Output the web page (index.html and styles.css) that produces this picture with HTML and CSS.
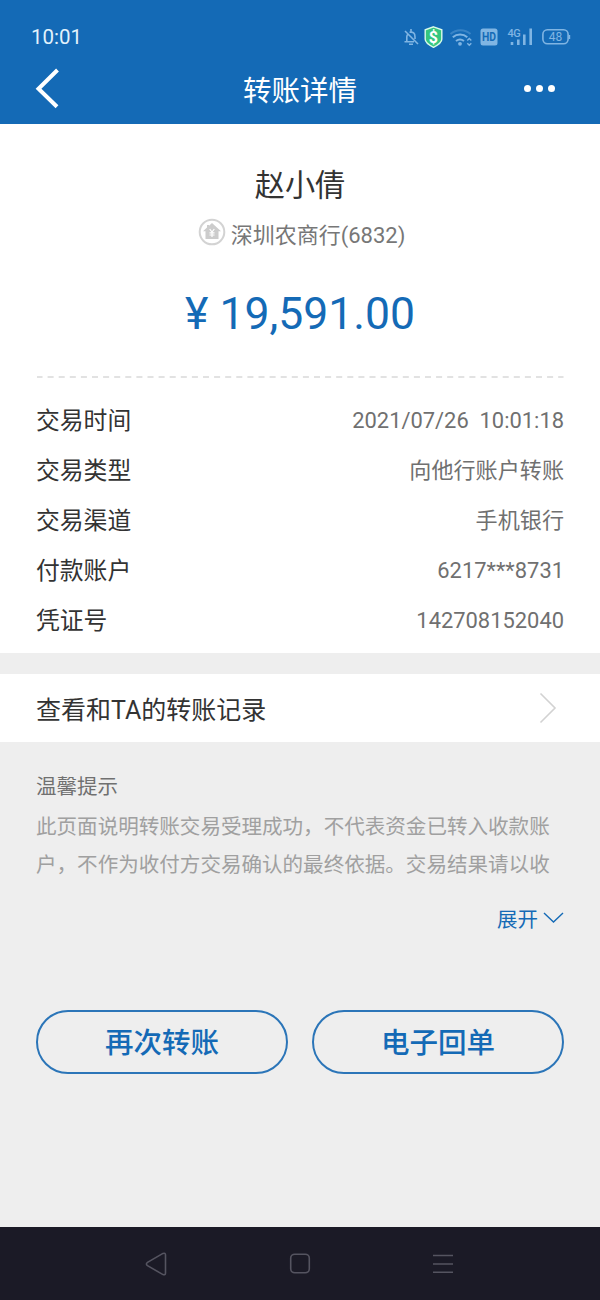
FILE: index.html
```html
<!DOCTYPE html>
<html lang="zh-CN">
<head>
<meta charset="utf-8">
<title>转账详情</title>
<link rel="stylesheet" href="styles.css">
</head>
<body>
<div class="screen">
  <header class="header">
    <div class="status">
      <span class="clock">10:01</span>
      <svg class="status-icons" width="172" height="28" viewBox="400 22 172 28">
        <g class="line">
          <path d="M404.500 41.700h9.500M406.800 41.500v-4.500q0-2 1.300-3.300M409.500 32.300q5.500-1 5.500 4.700v2M411 29v2.500M409 44.300h4M405 31l13 13"/>
        </g>
        <path class="shield-edge" d="M433.500 26.800l8.300 3v9.500c0 3.700-3.800 5.800-8.300 8-4.500-2.200-8.300-4.300-8.300-8v-9.500z"/>
        <text class="dollar" x="433.300" y="42.500">$</text>
        <path class="wifi-faint" d="M450.500 34a15 15 0 0 1 20 0"/>
        <path class="wifi" d="M452.800 37.300a11 11 0 0 1 14.500 0M456 41a6.500 6.500 0 0 1 8 0"/>
        <circle class="fill" cx="460" cy="43.800" r="1.900"/>
        <path class="tiny" d="M467.300 40.500l2-2 2 2M467.300 43.300l2 2 2-2"/>
        <rect class="fill" x="480.500" y="28.500" width="17" height="17" rx="2.500"/>
        <text class="hd" x="489" y="41.300" textLength="14" lengthAdjust="spacingAndGlyphs">HD</text>
        <text class="net" x="507.500" y="37">4G</text>
        <path class="bars" d="M512 42v3M518.300 39.500V45M524.300 34.500V45M530.700 28.500V45"/>
        <rect class="battery" x="542.900" y="29.800" width="25.200" height="14" rx="4.500"/>
        <path class="battery" d="M569.400 35v4"/>
        <text class="level" x="555.500" y="41">48</text>
      </svg>
    </div>
    <div class="nav">
      <svg class="back" width="26" height="42" viewBox="0 0 26 42"><path d="M23.500 2L4.500 20.800l18.500 18"/></svg>
      <h1 class="title">转账详情</h1>
      <div class="more"><i></i><i></i><i></i></div>
    </div>
  </header>

  <main>
    <section class="summary">
      <div class="name">赵小倩</div>
      <div class="bank">
        <svg width="28" height="28" viewBox="0 0 28 28">
          <circle class="ring" cx="14" cy="14" r="12.300"/>
          <path class="house" d="M14 5l9 8.200h-2.500V21H7.500v-7.800H5L9 9.500V7h2v.8z"/>
          <path class="yen" d="M11.700 11l2.300 3 2.300-3M14 14v5M11.500 14.800h5M11.500 17h5"/>
        </svg>
        <span>深圳农商行(6832)</span>
      </div>
      <div class="amount"><span>¥</span><span>19,591.00</span></div>
    </section>
    <svg class="divider" width="527" height="2" viewBox="0 0 527 2"><path d="M0 1h527"/></svg>
    <dl class="details">
      <div class="row"><dt>交易时间</dt><dd class="num">2021/07/26&nbsp; 10:01:18</dd></div>
      <div class="row"><dt>交易类型</dt><dd>向他行账户转账</dd></div>
      <div class="row"><dt>交易渠道</dt><dd>手机银行</dd></div>
      <div class="row"><dt>付款账户</dt><dd class="num">6217***8731</dd></div>
      <div class="row"><dt>凭证号</dt><dd class="num">142708152040</dd></div>
    </dl>
    <div class="history">
      <span>查看和TA的转账记录</span>
      <svg width="18" height="32" viewBox="0 0 18 32"><path d="M1.500 1.500L16 16 1.500 30.500"/></svg>
    </div>
    <section class="tips">
      <h2>温馨提示</h2>
      <p>此页面说明转账交易受理成功，不代表资金已转入收款账<br>户，不作为收付方交易确认的最终依据。交易结果请以收</p>
      <div class="expand"><span>展开</span><svg width="21" height="12" viewBox="0 0 21 12"><path d="M1 1l9.500 9L20 1"/></svg></div>
    </section>
    <div class="actions">
      <button>再次转账</button>
      <button>电子回单</button>
    </div>
  </main>

  <footer class="system">
    <svg width="24" height="26" viewBox="0 0 24 26"><path d="M19 2.400L3.500 11.300q-2.200 1.700 0 3.400L19 23.600q2.500.8 2.500-1.600V4q0-2.400-2.500-1.600z"/></svg>
    <svg width="24" height="26" viewBox="0 0 24 26"><rect x="2.700" y="3.200" width="18.600" height="18.600" rx="4"/></svg>
    <svg width="24" height="26" viewBox="0 0 24 26"><path d="M2 4.500h20M2 13h20M2 21.300h20"/></svg>
  </footer>
</div>
</body>
</html>
```
FILE: styles.css
```css
* { box-sizing: border-box; }
body {
  margin: 0;
  font-family: Roboto, "Noto Sans CJK SC", sans-serif;
  color: #333;
}
h1, h2, p, dl, dd { margin: 0; font-weight: 400; }
svg { display: block; fill: none; flex: none; }
.screen {
  width: 600px;
  height: 1300px;
  display: flex;
  flex-direction: column;
  background: #eee;
}
.header { height: 124px; background: #146ab6; color: #fff; }
.status {
  height: 54px;
  padding: 19px 28px 0 31px;
  display: flex;
  justify-content: space-between;
}
.clock { font-size: 20.5px; line-height: 36px; color: #e2f2fc; }
.status-icons { margin-top: 3px; }
.status-icons .line { stroke: #80b5e3; stroke-width: 1.6; }
.shield-edge { fill: #35c67f; stroke: #d9fbe9; stroke-width: 1.4; }
.dollar { font-size: 16px; font-weight: 700; fill: #fff; text-anchor: middle; }
.wifi { stroke: #80b5e3; stroke-width: 2; }
.wifi-faint { stroke: #3984c6; stroke-width: 2; }
.tiny { stroke: #80b5e3; stroke-width: 1.4; }
.fill { fill: #80b5e3; }
.hd { font-size: 12px; font-weight: 700; fill: #146ab6; text-anchor: middle; }
.net { font-size: 11px; font-weight: 500; letter-spacing: -0.6px; fill: #80b5e3; }
.bars { stroke: #80b5e3; stroke-width: 2.6; }
.battery { stroke: #80b5e3; stroke-width: 1.6; }
.level { font-size: 12px; fill: #80b5e3; text-anchor: middle; }
.nav {
  height: 70px;
  padding: 0 45px 0 34px;
  display: grid;
  grid-template-columns: 1fr auto 1fr;
  align-items: center;
}
.back { stroke: #fff; stroke-width: 4; }
.title { height: 70px; padding: 2px 0 0 11px; font-size: 28.5px; line-height: 72px; }
.more { display: flex; gap: 5px; justify-content: flex-end; margin-top: -1px; }
.more i { width: 7px; height: 7px; border-radius: 50%; background: #fff; }
.summary {
  height: 252px;
  padding-top: 41px;
  background: #fff;
  text-align: center;
}
.name { font-size: 30.2px; line-height: 42px; }
.bank {
  height: 34px;
  margin-top: 11px;
  padding-left: 3px;
  display: flex;
  justify-content: center;
  gap: 5px;
  font-size: 22px;
  line-height: 35px;
  color: #777;
}
.ring { stroke: #d3d3d3; stroke-width: 2; }
.house { fill: #ccc; }
.yen { stroke: #fff; stroke-width: 1.2; }
.amount {
  margin-top: 32px;
  display: flex;
  justify-content: center;
  gap: 11px;
  font-size: 44.5px;
  line-height: 60px;
  color: #146ab6;
}
main { flex: 1; display: flex; flex-direction: column; }
.divider { width: 600px; padding: 0 36.5px; background: #fff; stroke: #e2e2e2; stroke-width: 2; stroke-dasharray: 6 5.1; }
.details { height: 275px; padding: 17px 36px 0; background: #fff; }
.row { height: 50px; display: flex; justify-content: space-between; line-height: 50px; }
dt { font-size: 23.8px; line-height: 52px; }
dd { font-size: 22.1px; line-height: 51px; color: #707070; }
.num { font-size: 21.9px; line-height: 52px; }
.history {
  height: 68px;
  margin-top: 21px;
  padding: 0 43px 0 36px;
  display: flex;
  align-items: center;
  justify-content: space-between;
  background: #fff;
  font-size: 25px;
}
.history svg { stroke: #d2d2d2; stroke-width: 1.6; }
.tips { padding: 25px 36px 0; }
.tips h2 { font-size: 20.5px; line-height: 40px; color: #707070; }
.tips p { margin-top: 1px; font-size: 20.55px; line-height: 38px; color: #a0a0a0; white-space: nowrap; }
.expand {
  margin-top: 16px;
  display: flex;
  justify-content: flex-end;
  align-items: center;
  gap: 5px;
  font-size: 20.5px;
  line-height: 40px;
  color: #146ab6;
}
.expand svg { margin-top: -4px; stroke: #146ab6; stroke-width: 1.4; }
.actions {
  margin-top: 70px;
  padding: 0 36px;
  display: grid;
  grid-template-columns: 1fr 1fr;
  gap: 24px;
}
button {
  height: 64px;
  padding: 2px 0 0;
  border: 2px solid #2b75b8;
  border-radius: 32px;
  background: none;
  color: #146ab6;
  font: 500 28.5px/60px Roboto, "Noto Sans CJK SC", sans-serif;
}
.system {
  height: 73px;
  padding: 0 145px 0 144px;
  display: flex;
  justify-content: space-between;
  align-items: center;
  background: #1b1a26;
}
.system svg { stroke: #555460; stroke-width: 1.6; }
```
